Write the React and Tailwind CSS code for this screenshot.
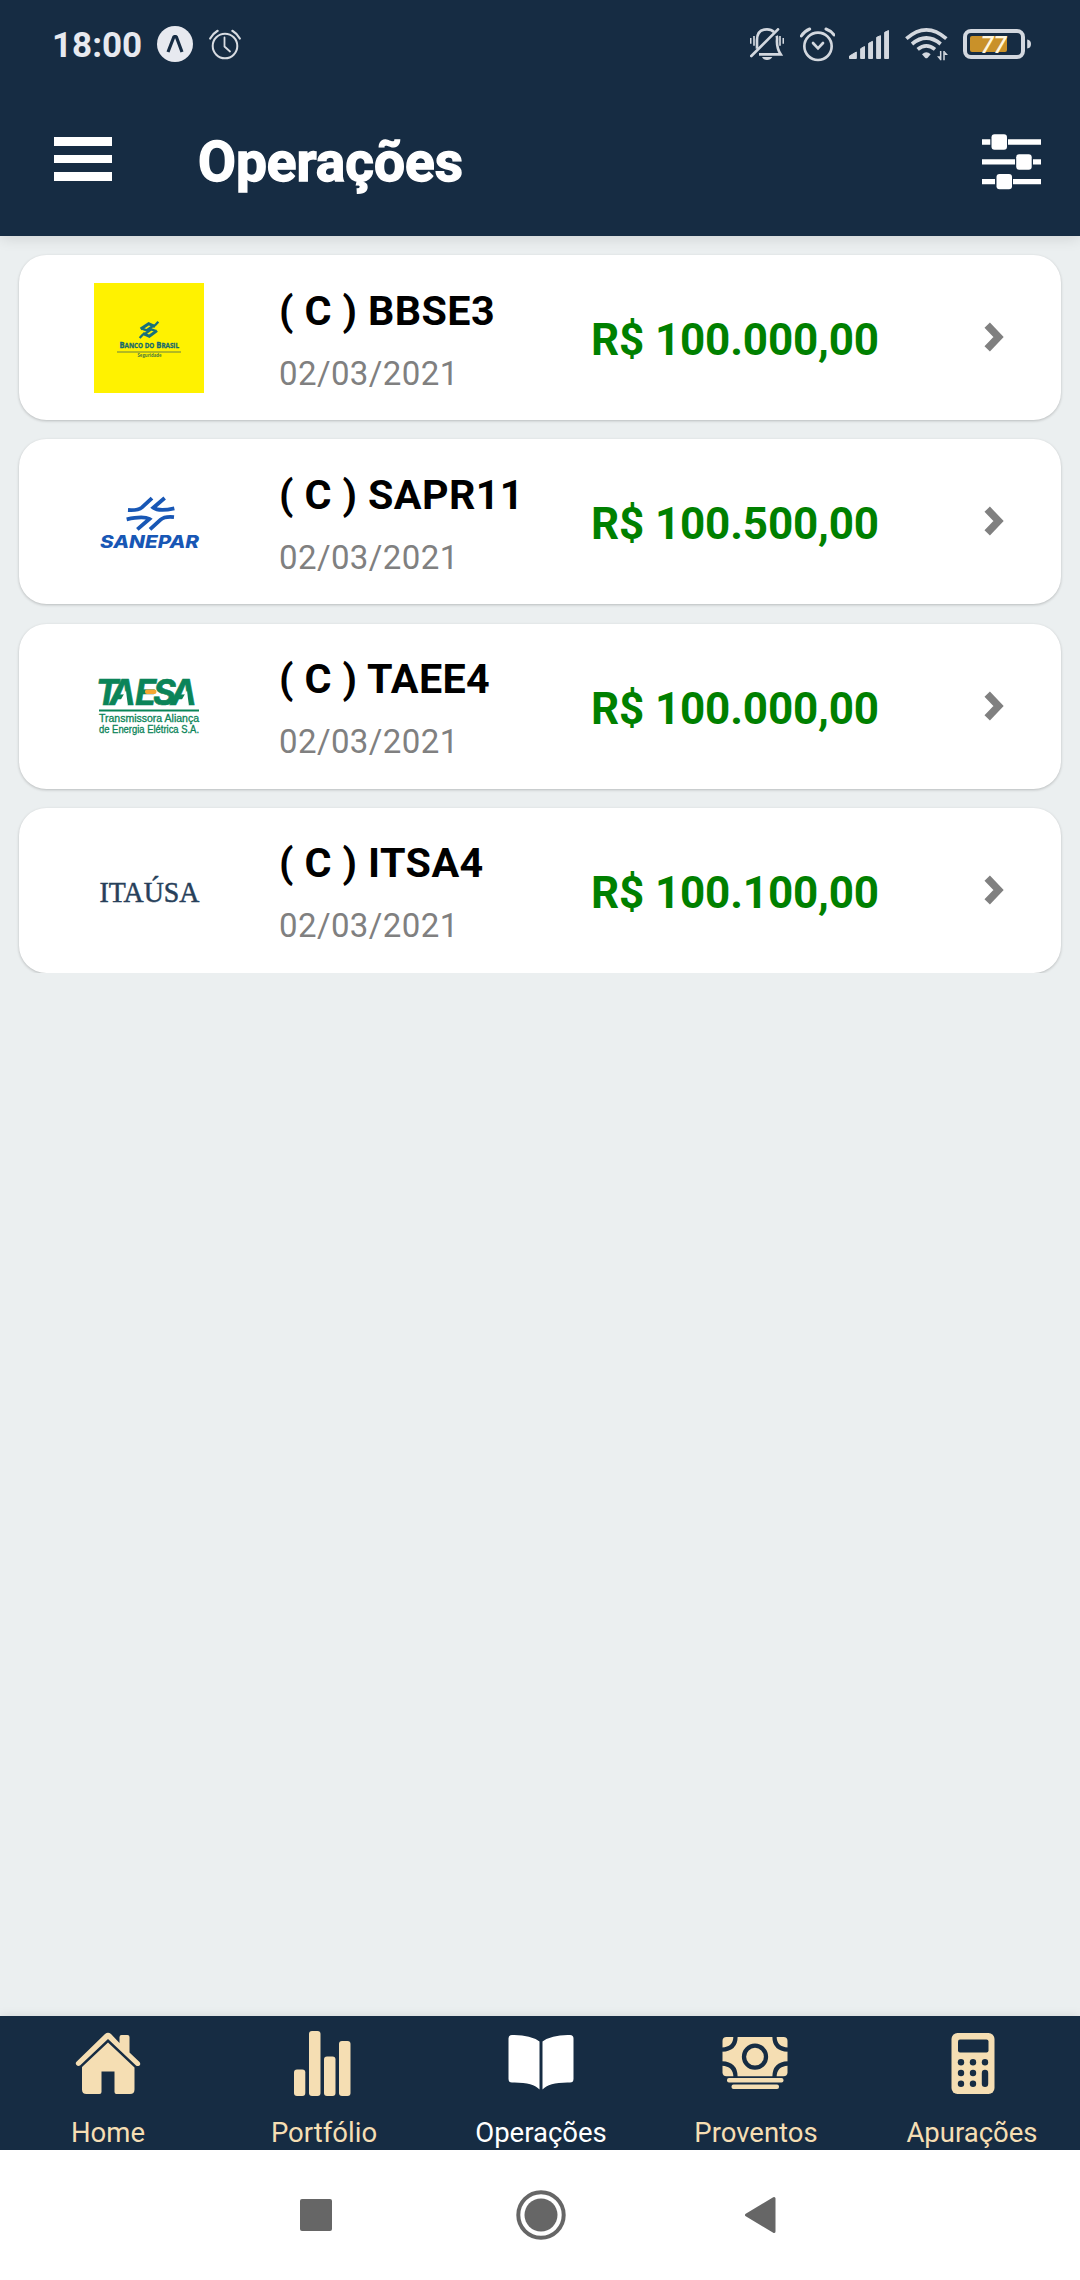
import React from "react";

const Expo = () => (
  <svg className="ml-[16px] h-9 w-9" viewBox="0 0 36 36">
    <circle cx="18" cy="18" r="18" fill="#e7e9ef" />
    <path d="M11 26 L17 10.5 H19.2 L25 26" fill="none" stroke="#162c43" strokeWidth="3.2" strokeLinejoin="bevel" />
  </svg>
);

const ThinAlarm = () => (
  <svg className="ml-4 h-[31px] w-8" viewBox="0 0 32 31" fill="none" stroke="#d8dce2" strokeLinecap="round">
    <circle cx="16" cy="17" r="12.3" strokeWidth="2" />
    <path d="M15.5 8.5V17.5L21 22.5" strokeWidth="1.8" />
    <path d="M1.2 9.5Q4 4.5 8.6 1.8M30.8 9.5Q28 4.5 23.4 1.8" strokeWidth="2.2" />
  </svg>
);

const BellOff = () => (
  <svg className="h-[33px] w-[34px]" viewBox="150 84 102 99" fill="none" stroke="#d3d8df" strokeWidth="8">
    <path d="M171 146V120Q171 88 201 88Q214 88 222 96M230 107Q232 112 231 122Q230 145 242 163H177" />
    <path d="M154 168L234 88" strokeLinecap="round" />
    <path d="M152 114V131M162 108V137M240 108V137M250 114V131" strokeWidth="5" />
    <path d="M186 171H217Q212 180 201 180Q190 180 186 171Z" fill="#d3d8df" stroke="none" />
  </svg>
);

const Alarm = () => (
  <svg className="ml-4 h-[35px] w-[35px]" viewBox="300 80 105 105" fill="none" stroke="#d3d8df" strokeWidth="8">
    <circle cx="354" cy="138" r="41" />
    <path d="M339 128L354 144L369 128" strokeLinecap="round" />
    <path d="M304 107Q314 92 329 86M402 104Q393 91 378 86" strokeLinecap="round" strokeWidth="9" />
  </svg>
);

const Signal = () => (
  <svg className="ml-[14px] h-[29px] w-10" viewBox="447 87 120 87" fill="#d3d8df" stroke="#d3d8df" strokeWidth="3" strokeLinejoin="round">
    <path d="M448.500 165L469 153V172.500H448.500ZM482 143L493.500 136.500V172.500H482ZM506 127L517.500 121V172.500H506ZM530 109L541.500 104V172.500H530ZM554 94L565.500 88.500V172.500H554Z" />
  </svg>
);

const Wifi = () => (
  <svg className="ml-[16px] h-[34px] w-[43px]" viewBox="614 84 129 102" fill="none" stroke="#d3d8df" strokeWidth="11">
    <path d="M618 119Q678 66 738 119M635 135Q678 99 721 135M652 151Q678 130 704 151" />
    <path d="M665 166Q678 153 691 166L682 176Q678 179 674 176Z" fill="#d3d8df" stroke="none" />
    <path d="M721 156V184M731 156V184" strokeWidth="4.500" />
    <path d="M720 184L710 172H720ZM732 156L743 168H732Z" fill="#d3d8df" stroke="none" />
  </svg>
);

const Battery = () => (
  <svg className="ml-[15px] h-[30px] w-[68px]" viewBox="0 0 68 30">
    <rect x="2" y="2" width="58" height="26" rx="6" fill="none" stroke="#d3d8df" strokeWidth="4" />
    <rect x="7" y="7" width="37" height="16" rx="2" fill="#c99129" />
    <path d="M64.200 10.500Q68 11 68 15Q68 19 64.200 19.500Z" fill="#d3d8df" />
    <text x="17.500" y="24" fontFamily="Roboto" fontSize="23" fontStyle="italic" fontWeight="500" fill="#fff6dd" textLength="26" lengthAdjust="spacingAndGlyphs">77</text>
  </svg>
);

const Sliders = () => (
  <svg className="mt-[134px] h-14 w-[60px]" viewBox="0 0 60 56" fill="#fff">
    <path d="M0 5.300H8.300V10.700H0ZM26 5.300H59V10.700H26ZM0 25.200H33V30.600H0ZM51 25.200H59V30.600H51ZM0 45H13V50.200H0ZM31 45H59V50.200H31Z" />
    <rect x="9.500" y="0.300" width="15.500" height="15.500" rx="3" />
    <rect x="34.200" y="20.200" width="15.500" height="15.500" rx="3" />
    <rect x="14.500" y="40" width="15.500" height="15.200" rx="3" />
  </svg>
);

const BancoDoBrasil = () => (
  <svg className="h-[110px] w-[110px] overflow-visible" viewBox="0 0 110 110">
    <rect width="110" height="110" fill="#fff200" />
    <g fill="none" stroke="#18707a" strokeWidth="9" transform="translate(18 27) scale(.3333)">
      <path d="M86 57L110 41L129 50M135 62L112 79L93 70" />
      <path d="M83 84L94 72M128 47L139 35" strokeWidth="7" />
      <path d="M90 56L104 61L126 46M132 63L118 58L96 74" strokeWidth="7" />
    </g>
    <text x="25.500" y="64.700" fontFamily="Open Sans" fontWeight="700" fontSize="8.400" fill="#17696d" stroke="#17696d" strokeWidth=".3" textLength="59.500" lengthAdjust="spacingAndGlyphs">B<tspan fontSize="7">ANCO DO</tspan> B<tspan fontSize="7">RASIL</tspan></text>
    <path d="M23 69H87" stroke="#9aa62e" strokeWidth="1.300" />
    <text x="43.500" y="74.300" fontFamily="Open Sans" fontWeight="700" fontSize="5" fill="#4f7a3d" textLength="24" lengthAdjust="spacingAndGlyphs">Seguridade</text>
  </svg>
);

const Sanepar = () => (
  <svg className="h-[110px] w-[110px] overflow-visible" viewBox="0 0 110 110">
    <g fill="none" stroke="#1857b5" strokeWidth="11.500" transform="translate(26 24.700) scale(.3333)">
      <path d="M24 55Q54 57 66 47L96 19M134 19L100 48Q116 60 163 50" />
      <path d="M162 76Q134 73 122 84L90 113M52 113L88 82Q70 72 20 83" />
    </g>
    <text x="6" y="80.700" fontFamily="Inter" fontWeight="800" fontStyle="italic" fontSize="17.500" fill="#1857b5" textLength="99" lengthAdjust="spacingAndGlyphs">SANEPAR</text>
  </svg>
);

const Taesa = () => (
  <svg className="h-[110px] w-[110px] overflow-visible" viewBox="0 0 110 110">
    <g fill="#0b8458">
      <text x="1.500 15.500 41 59 76.500" y="53.500" fontFamily="Inter" fontWeight="700" fontStyle="italic" fontSize="35" stroke="#0b8458" strokeWidth=".6">TAESA</text>
      <path d="M23.500 54.500L32 39.500L33.800 54.500ZM84.500 54.500L93 39.500L94.800 54.500Z" fill="#fff" />
      <path d="M5 58.500H105V60.500H5Z" />
      <text x="5" y="71.200" fontFamily="Liberation Sans" fontSize="10" stroke="#0b8458" strokeWidth=".3" textLength="100" lengthAdjust="spacingAndGlyphs">Transmissora Aliança</text>
      <text x="5" y="82" fontFamily="Liberation Sans" fontSize="10" stroke="#0b8458" strokeWidth=".3" textLength="100" lengthAdjust="spacingAndGlyphs">de Energia Elétrica S.A.</text>
    </g>
    <rect x="51" y="38.500" width="11.500" height="4.500" rx="2" fill="#f5a732" />
  </svg>
);

const Itausa = () => (
  <svg className="h-[110px] w-[110px] overflow-visible" viewBox="0 0 110 110">
    <text x="5.500" y="66.500" fontFamily="Liberation Serif" fontSize="29" fill="#27405a" stroke="#27405a" strokeWidth=".5" textLength="100" lengthAdjust="spacingAndGlyphs">ITAÚSA</text>
  </svg>
);

const operations = [
  { logo: <BancoDoBrasil />, ticker: "BBSE3", amount: "R$ 100.000,00" },
  { logo: <Sanepar />, ticker: "SAPR11", amount: "R$ 100.500,00" },
  { logo: <Taesa />, ticker: "TAEE4", amount: "R$ 100.000,00" },
  { logo: <Itausa />, ticker: "ITSA4", amount: "R$ 100.100,00" },
];

const Operation = ({ logo, ticker, amount }) => (
  <div className="flex h-[165px] shrink-0 items-center rounded-[27.5px] bg-white pl-[75px] shadow-[0_1px_3px_rgba(0,0,0,0.22)]">
    {logo}
    <div className="ml-[75px] w-[312px] whitespace-nowrap">
      <div className="mt-[4px] text-[41.25px] leading-[48px] font-bold tracking-[0.4px] text-black">( C ) {ticker}</div>
      <div className="mt-[19px] text-[33px] leading-[39px] tracking-[0.4px] text-[#808080]">02/03/2021</div>
    </div>
    <div className="mt-[5px] w-[393px] text-[44px] leading-[52px] font-bold tracking-[-0.15px] whitespace-nowrap text-[#008000]">{amount}</div>
    <svg className="-mt-px h-[30px] w-5" viewBox="0 0 20 30">
      <path d="M3.200 3.200L14.500 15L3.200 26.800" fill="none" stroke="#808080" strokeWidth="7.500" />
    </svg>
  </div>
);

const HomeIcon = () => (
  <svg className="h-[66px] w-[66px]" viewBox="0 0 66 66" fill="#f5deb3">
    <path d="M44.500 12V6.200Q44.500 4 46.500 4H52.500Q54.500 4 54.500 6V21.500L64.500 31Q66 33 64.500 34.500Q62.500 35.500 61 34.500L33 8L5 34.500Q3 35.500 1.500 34Q0 32.500 1.500 30.800L30 3Q33 .5 36 3Z" />
    <path d="M33 11.500L59.500 36.500V58.500Q59.500 63 55 63H41.500Q39.500 63 39.500 61V40.500H26.500V61Q26.500 63 24.500 63H11.500Q7 63 7 58.500V36Z" />
  </svg>
);

const BarsIcon = () => (
  <svg className="ml-[2px] h-[66px] w-[66px]" viewBox="0 0 66 66" fill="#f5deb3">
    <rect x="2" y="38.500" width="11.300" height="26.500" rx="3" />
    <rect x="17" y="0" width="11.500" height="65" rx="3" />
    <rect x="32" y="25.500" width="11.500" height="39.500" rx="3" />
    <rect x="47" y="10" width="11.500" height="55" rx="3" />
  </svg>
);

const BookIcon = () => (
  <svg className="ml-px h-[66px] w-[66px]" viewBox="0 0 66 66" fill="#fff">
    <path d="M31.500 58.500V10.500Q22 3.500 4 4Q.5 4 .5 7.500V48Q.5 51.500 4 51.500Q25 51 31.500 58.500ZM34.500 58.500V10.500Q44 3.500 62 4Q65.500 4 65.500 7.500V48Q65.500 51.500 62 51.500Q41 51 34.500 58.500Z" />
  </svg>
);

const CashIcon = () => (
  <svg className="-ml-[3px] h-[66px] w-[66px]" viewBox="0 0 66 66">
    <g transform="translate(0 1)">
      <rect x="0.500" y="5" width="65" height="39.300" rx="4" fill="#f5deb3" />
      <g fill="none" stroke="#162c43" strokeWidth="4.300">
        <circle cx="33" cy="24.700" r="11" />
        <path d="M0 17.700Q13.500 17 13.500 4.500M66 17.700Q52.500 17 52.500 4.500M0 31.500Q13.500 32 13.500 45M66 31.500Q52.500 32 52.500 45" />
      </g>
      <g fill="#f5deb3">
        <rect x="5" y="46" width="56.500" height="4.600" rx="2" />
        <rect x="9.500" y="52.500" width="47.500" height="4.400" rx="2" />
      </g>
    </g>
  </svg>
);

const CalculatorIcon = () => (
  <svg className="ml-px h-[66px] w-[66px]" viewBox="0 0 66 66">
    <rect x="11.500" y="2" width="43" height="61" rx="6" fill="#f5deb3" />
    <g fill="#162c43" transform="translate(0 1)">
      <rect x="18" y="7.500" width="30.500" height="13" rx="2" />
      <circle cx="21" cy="30.200" r="3.200" /><circle cx="33" cy="30.200" r="3.200" /><circle cx="45" cy="30.200" r="3.200" />
      <circle cx="21" cy="41" r="3.200" /><circle cx="33" cy="41" r="3.200" />
      <circle cx="21" cy="51.700" r="3.200" /><circle cx="33" cy="51.700" r="3.200" />
      <rect x="41.800" y="37.700" width="6.400" height="17.200" rx="3.200" />
    </g>
  </svg>
);

const tabs = [
  { label: "Home", icon: <HomeIcon /> },
  { label: "Portfólio", icon: <BarsIcon /> },
  { label: "Operações", icon: <BookIcon />, active: true },
  { label: "Proventos", icon: <CashIcon /> },
  { label: "Apurações", icon: <CalculatorIcon /> },
];

export default function App() {
  return (
    <div className="flex h-[2280px] w-[1080px] flex-col overflow-hidden bg-[#ebeff0] font-['Roboto',sans-serif]">
      <header className="relative z-10 h-[236px] shrink-0 bg-[#162c43] shadow-[0_2px_14px_rgba(0,0,0,0.12)]">
        <div className="flex h-[88px] items-center pr-[49px] pl-[52px]">
          <div className="mt-[2px] w-[89px] text-[35px] leading-none font-bold text-[#e7e9ef]">18:00</div>
          <Expo />
          <ThinAlarm />
          <div className="flex-1" />
          <BellOff />
          <Alarm />
          <Signal />
          <Wifi />
          <Battery />
        </div>
        <div className="-mt-[88px] flex items-start pr-[38px] pl-[54px]">
          <div className="mt-[137px] flex w-[58px] flex-col gap-[9px]">
            <div className="h-[8.7px] bg-white" />
            <div className="h-[8.7px] bg-white" />
            <div className="h-[8.7px] bg-white" />
          </div>
          <h1 className="mt-[130px] ml-[86px] flex-1 text-[55px] leading-[65px] font-bold text-white [-webkit-text-stroke:1.4px_white]">Operações</h1>
          <Sliders />
        </div>
      </header>
      <main className="flex-1">
        <div className="flex flex-col gap-[19.25px] overflow-hidden px-[19px] pt-[19px]">
          {operations.map((o) => (
            <Operation key={o.ticker} {...o} />
          ))}
        </div>
      </main>
      <nav className="grid h-[134px] shrink-0 grid-cols-[216px_216px_216px_216px_216px] bg-[#162c43] pt-[15px] shadow-[0_0_10px_rgba(0,0,0,0.1)]">
        {tabs.map((t) => (
          <div key={t.label} className="flex flex-col items-center">
            {t.icon}
            <span className={t.active ? "mt-[20px] ml-[2px] text-[27.5px] leading-[32px] text-white" : "mt-[20px] text-[27.5px] leading-[32px] text-[#f5deb3]"}>{t.label}</span>
          </div>
        ))}
      </nav>
      <footer className="flex h-[130px] shrink-0 items-center bg-white pl-[300px]">
        <div className="h-8 w-8 rounded-[2px] bg-[#666]" />
        <svg className="ml-[184px] h-[50px] w-[50px]" viewBox="0 0 50 50">
          <circle cx="25" cy="25" r="22.700" fill="none" stroke="#666" strokeWidth="4" />
          <circle cx="25" cy="25" r="16.500" fill="#666" />
        </svg>
        <svg className="ml-[178px] h-[38px] w-8" viewBox="0 0 32 38">
          <path d="M2.500 19L30 2.500V35.500Z" fill="#666" stroke="#666" strokeWidth="3" strokeLinejoin="round" />
        </svg>
      </footer>
    </div>
  );
}
